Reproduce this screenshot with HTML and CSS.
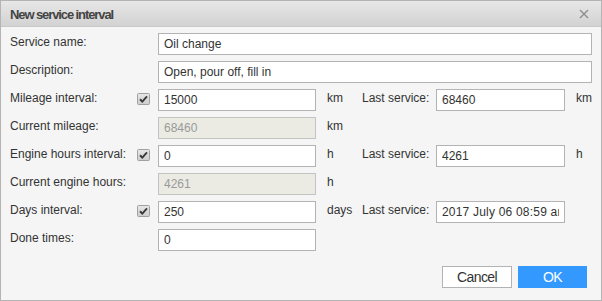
FILE: index.html
```html
<!DOCTYPE html>
<html>
<head>
<meta charset="utf-8">
<link rel="stylesheet" href="styles.css">
</head>
<body>
<div class="window">
  <div class="header">
    <span class="title">New service interval</span>
    <span class="close"><svg width="10" height="10" viewBox="0 0 10 10"><path d="M1 1L9 9M9 1L1 9" stroke="#8c8c8c" stroke-width="1.3" fill="none"/></svg></span>
  </div>
  <div class="body">
    <div class="form">
      <div class="label c1">Service name:</div>
      <input class="field wide" type="text" value="Oil change">

      <div class="label c1">Description:</div>
      <input class="field wide" type="text" value="Open, pour off, fill in">

      <div class="label c1">Mileage interval:</div>
      <span class="check c2"><svg width="13" height="13" viewBox="0 0 13 13"><rect x="0.5" y="0.5" width="12" height="11" rx="1" fill="url(#g)" stroke="#a0a0a0"/><path d="M3 6.2L5.3 8.6L10 3.3" stroke="#3a3a3a" stroke-width="2" fill="none"/></svg></span>
      <input class="field c3" type="text" value="15000">
      <div class="unit c4">km</div>
      <div class="label c5">Last service:</div>
      <input class="field c6" type="text" value="68460">
      <div class="unit c7">km</div>

      <div class="label c1">Current mileage:</div>
      <input class="field c3 disabled" type="text" value="68460" disabled>
      <div class="unit c4">km</div>

      <div class="label c1">Engine hours interval:</div>
      <span class="check c2"><svg width="13" height="13" viewBox="0 0 13 13"><rect x="0.5" y="0.5" width="12" height="11" rx="1" fill="url(#g)" stroke="#a0a0a0"/><path d="M3 6.2L5.3 8.6L10 3.3" stroke="#3a3a3a" stroke-width="2" fill="none"/></svg></span>
      <input class="field c3" type="text" value="0">
      <div class="unit c4">h</div>
      <div class="label c5">Last service:</div>
      <input class="field c6" type="text" value="4261">
      <div class="unit c7">h</div>

      <div class="label c1">Current engine hours:</div>
      <input class="field c3 disabled" type="text" value="4261" disabled>
      <div class="unit c4">h</div>

      <div class="label c1">Days interval:</div>
      <span class="check c2"><svg width="13" height="13" viewBox="0 0 13 13"><rect x="0.5" y="0.5" width="12" height="11" rx="1" fill="url(#g)" stroke="#a0a0a0"/><path d="M3 6.2L5.3 8.6L10 3.3" stroke="#3a3a3a" stroke-width="2" fill="none"/></svg></span>
      <input class="field c3" type="text" value="250">
      <div class="unit c4">days</div>
      <div class="label c5">Last service:</div>
      <input class="field c6 date" type="text" value="2017 July 06 08:59 am">

      <div class="label c1">Done times:</div>
      <input class="field c3" type="text" value="0">
    </div>
    <div class="footer">
      <button class="btn cancel">Cancel</button>
      <button class="btn ok">OK</button>
    </div>
  </div>
</div>
<svg width="0" height="0" class="defs"><defs><linearGradient id="g" x1="0" y1="0" x2="0" y2="1"><stop offset="0" stop-color="#e8e8e8"/><stop offset="1" stop-color="#cdcdcd"/></linearGradient></defs></svg>
</body>
</html>
```

FILE: styles.css
```css
html, body {
  margin: 0;
  padding: 0;
}
body {
  font-family: "Liberation Sans", Arial, sans-serif;
  font-size: 12px;
  color: #333;
  background: #f5f5f5;
}
.defs {
  position: absolute;
}
.window {
  box-sizing: border-box;
  width: 602px;
  height: 301px;
  border: 1px solid #b4b4b4;
  background: #f5f5f5;
  display: flex;
  flex-direction: column;
}
.header {
  height: 26px;
  flex: none;
  background: linear-gradient(#e7e7e7, #d2d2d2);
  border-bottom: 1px solid #c9c9c9;
  display: flex;
  align-items: center;
  justify-content: space-between;
  padding: 0 12px 0 9px;
  box-sizing: border-box;
}
.title {
  font-weight: bold;
  font-size: 13px;
  letter-spacing: -1.1px;
  color: #444;
  padding-top: 1px;
}
.close {
  display: flex;
  width: 10px;
  height: 10px;
}
.body {
  padding: 6px 10px 0 9px;
  display: flex;
  flex-direction: column;
}
.form {
  display: grid;
  grid-template-columns: 127px 21px 158px 46px 74px 129px 1fr;
  grid-auto-rows: 22px;
  row-gap: 6px;
}
.label, .unit {
  line-height: 16px;
  padding-top: 1px;
  white-space: nowrap;
}
.unit {
  padding-left: 11px;
}
.c1 { grid-column: 1; }
.c2 { grid-column: 2; }
.c3 { grid-column: 3; }
.c4 { grid-column: 4; }
.c5 { grid-column: 5; }
.c6 { grid-column: 6; }
.c7 { grid-column: 7; }
.wide { grid-column: 3 / -1; }
.check {
  display: flex;
  padding-top: 4px;
}
.field {
  box-sizing: border-box;
  height: 22px;
  width: 100%;
  margin: 0;
  border: 1px solid #b3b3b3;
  background: #fff;
  padding: 0 5px;
  font-family: "Liberation Sans", Arial, sans-serif;
  font-size: 12px;
  color: #333;
  outline: none;
}
.field.date {
  letter-spacing: 0.2px;
}
.field.disabled {
  background: #ebebe4;
  border-color: #c3c3c3;
  color: #9a9a9a;
}
.footer {
  display: flex;
  justify-content: flex-end;
  gap: 6px;
  margin-top: 15px;
  padding-right: 4px;
}
.btn {
  box-sizing: border-box;
  height: 22px;
  margin: 0;
  font-family: "Liberation Sans", Arial, sans-serif;
  font-size: 14px;
  letter-spacing: -0.6px;
  padding: 0;
  cursor: pointer;
}
.cancel {
  width: 70px;
  background: #fff;
  border: 1px solid #b3b3b3;
  color: #333;
}
.ok {
  width: 69px;
  background: #3399ff;
  border: 1px solid #3399ff;
  color: #fff;
}
```
